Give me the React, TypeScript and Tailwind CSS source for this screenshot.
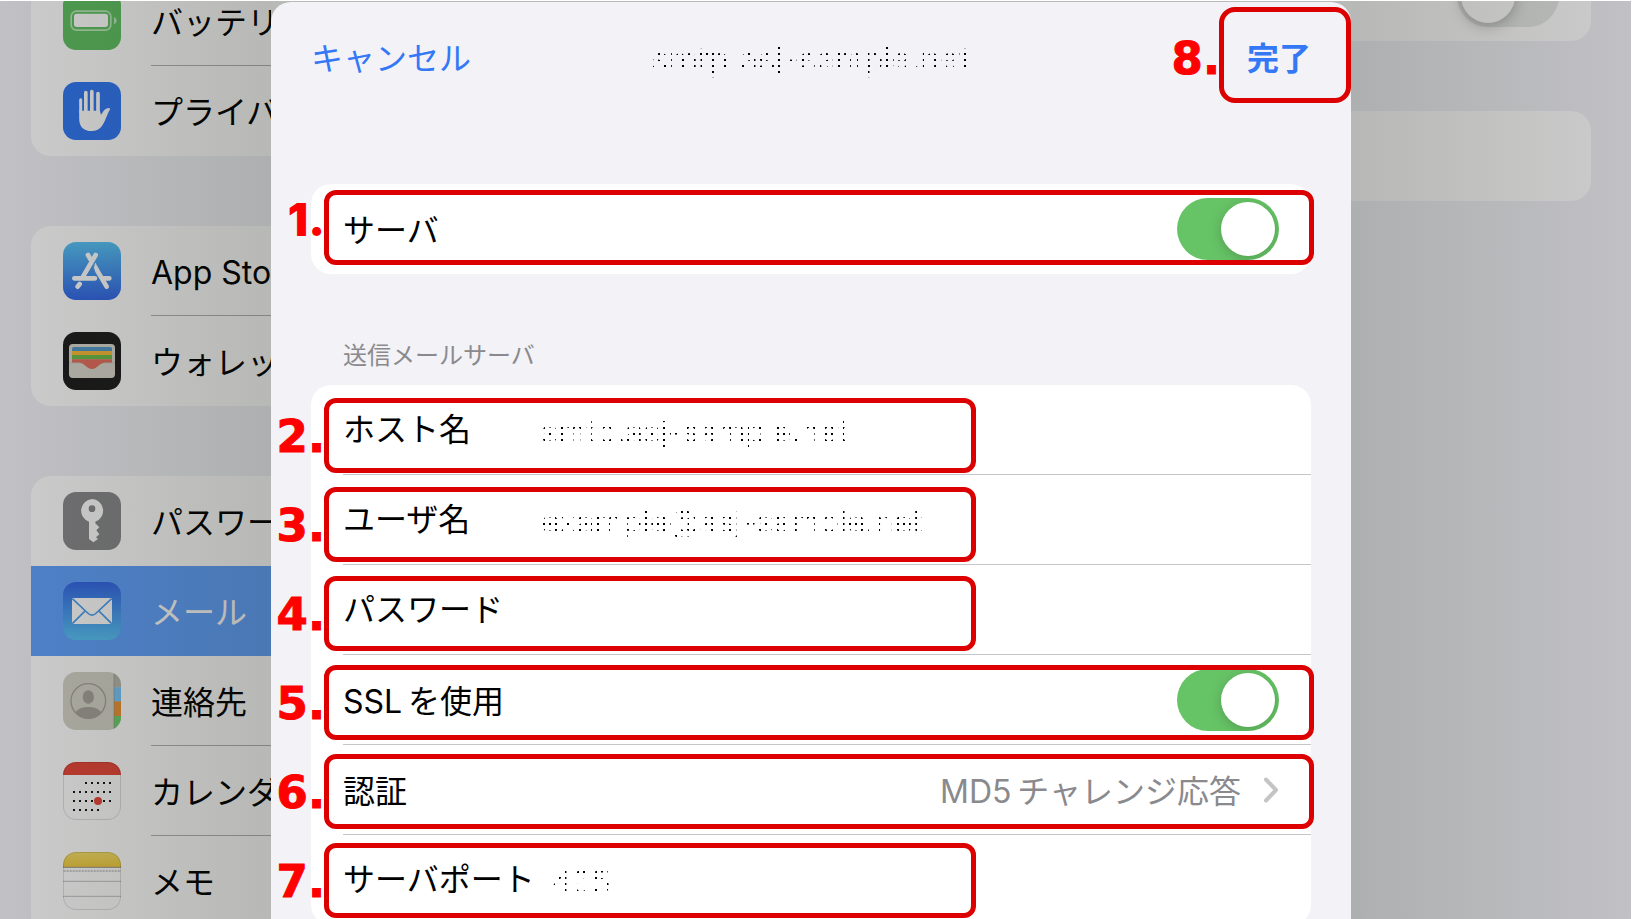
import { useState, type ReactNode } from "react";

const LIGHT = "#cbcbcb";

const icons: Record<string, ReactNode> = {
  battery: (
    <>
      <rect width="174" height="174" fill="#4d9a4f" />
      <rect x="24.500" y="57.500" width="119" height="57" rx="16" fill="none" stroke="#94b894" strokeWidth="5" />
      <rect x="33" y="65" width="102" height="40" rx="8" fill={LIGHT} />
      <path d="M153 75q8 3 8 11t-8 11z" fill="#94b894" />
    </>
  ),
  hand: (
    <>
      <rect width="174" height="174" fill="#2860c2" />
      <g stroke={LIGHT} strokeWidth="11" strokeLinecap="round">
        <path d="M53 53V90" strokeWidth="9" />
        <path d="M68.500 32V90M86.500 29V90M105 35V90" />
      </g>
      <path
        d="M48.500 86H110.500L114 98C121 91 123 78 139 78Q143 79 140 84C135 92 133 100 129 108C120 130 112 147 86 147C62 147 48.500 134 48.500 110Z"
        fill={LIGHT}
      />
    </>
  ),
  store: (
    <>
      <defs>
        <linearGradient id="storeBg" x1="0" y1="0" x2="0" y2="1">
          <stop offset="0" stopColor="#479cc4" />
          <stop offset="1" stopColor="#2a52b8" />
        </linearGradient>
      </defs>
      <rect width="174" height="174" fill="url(#storeBg)" />
      <g stroke={LIGHT} strokeWidth="14" strokeLinecap="round">
        <path d="M34 109H96M122 109H139M50 126L44 134M75 39L82 51M98 39L60 104" />
        <path d="M98 78L131 134" />
      </g>
      <path d="M92 66L98 62L109 88L98 92Z" fill={LIGHT} />
      <path d="M95 62Q87 76 96 92" fill="none" stroke="#3a78be" strokeWidth="3" />
    </>
  ),
  wallet: (
    <>
      <rect width="174" height="174" fill="#181818" />
      <rect x="18" y="36" width="138" height="102" rx="11" fill="#aeaca4" />
      <path d="M27 58V50Q27 45 32 45H142Q147 45 147 50V58Z" fill="#437aa2" />
      <rect x="27" y="57" width="120" height="13" fill="#c8952f" />
      <rect x="27" y="69" width="120" height="13" fill="#57983c" />
      <path d="M27 82H147V93H123C108 93 104 111 87 111S66 93 51 93H27Z" fill="#b7594c" />
      <path d="M18 92H52M122 92H156" stroke="#99978f" strokeWidth="2" />
    </>
  ),
  key: (
    <>
      <rect width="174" height="174" fill="#6e6e70" />
      <path
        d="M87 21A35 35 0 0 1 97 89V94L109 106L100 115L109 127L99 136L105 141L91 151L78 141V89A35 35 0 0 1 87 21Z"
        fill={LIGHT}
      />
      <circle cx="87" cy="50" r="10" fill="#6e6e70" />
    </>
  ),
  mail: (
    <>
      <defs>
        <linearGradient id="mailBg" x1="0" y1="0" x2="0" y2="1">
          <stop offset="0" stopColor="#2a52b8" />
          <stop offset="1" stopColor="#479cc4" />
        </linearGradient>
      </defs>
      <rect width="174" height="174" fill="url(#mailBg)" />
      <rect x="27" y="48" width="120" height="78" rx="3" fill={LIGHT} />
      <path
        d="M28 50L74 93Q87 106 100 93L146 50M28 125L65 88M146 125L109 88"
        fill="none"
        stroke="#3b7fc0"
        strokeWidth="5"
      />
    </>
  ),
  contacts: (
    <>
      <rect width="174" height="174" fill="#aaa9a0" />
      <rect x="153" width="21" height="46" fill="#93928a" />
      <rect x="153" y="46" width="21" height="42" fill="#609ec8" />
      <rect x="153" y="88" width="21" height="44" fill="#bc752a" />
      <rect x="153" y="132" width="21" height="42" fill="#58a656" />
      <path d="M153 0V174" stroke="#77766f" strokeWidth="2" />
      <circle cx="76" cy="87" r="52" fill="none" stroke="#85827b" strokeWidth="4" />
      <ellipse cx="76" cy="75" rx="17" ry="20" fill="#85827b" />
      <path d="M37 121Q49 105 76 105T115 121Q100 140 76 140T37 121Z" fill="#85827b" />
    </>
  ),
  calendar: (
    <>
      <rect width="174" height="174" fill={LIGHT} />
      <rect width="174" height="39" fill="#b8392e" />
      <g stroke="#111" strokeWidth="6">
        <path d="M66 63H146" strokeDasharray="6 12" />
        <path d="M30 90H146" strokeDasharray="6 12" />
        <path d="M30 117H146" strokeDasharray="6 12" />
        <path d="M30 144H110" strokeDasharray="6 12" />
      </g>
      <circle cx="105" cy="117" r="12" fill="#b8392e" />
      <rect x="1" y="1" width="172" height="172" rx="38" fill="none" stroke="#000" strokeOpacity="0.150" strokeWidth="3" />
    </>
  ),
  memo: (
    <>
      <defs>
        <linearGradient id="memoBg" x1="0" y1="0" x2="0" y2="1">
          <stop offset="0" stopColor="#c4b253" />
          <stop offset="1" stopColor="#c1a233" />
        </linearGradient>
      </defs>
      <rect width="174" height="174" fill={LIGHT} />
      <rect width="174" height="46" fill="url(#memoBg)" />
      <path d="M0 46H174" stroke="#7c7a74" strokeWidth="3" />
      <path d="M2 57H174" stroke="#a3a3a3" strokeWidth="6" strokeDasharray="6 3" />
      <path d="M0 88H174M0 133H174" stroke="#9b9b9b" strokeWidth="3" />
      <rect x="1" y="1" width="172" height="172" rx="38" fill="none" stroke="#000" strokeOpacity="0.150" strokeWidth="3" />
    </>
  ),
};

const groups = [
  [
    { icon: "battery", label: "バッテリー" },
    { icon: "hand", label: "プライバシー" },
  ],
  [
    { icon: "store", label: "App Store" },
    { icon: "wallet", label: "ウォレット" },
  ],
  [
    { icon: "key", label: "パスワード" },
    { icon: "mail", label: "メール", selected: true },
    { icon: "contacts", label: "連絡先" },
    { icon: "calendar", label: "カレンダー" },
    { icon: "memo", label: "メモ" },
  ],
];

function SidebarRow({ icon, label, selected, line }: { icon: string; label: string; selected?: boolean; line: boolean }) {
  return (
    <li className={selected ? "bg-[#4e81ca] text-[#cbcbcb]" : "text-black"}>
      <a href="#" className="flex h-[90px] items-center gap-[30px] overflow-hidden pl-8">
        <svg viewBox="0 0 174 174" className="size-[58px] shrink-0 rounded-[13px]" aria-hidden="true">
          {icons[icon]}
        </svg>
        <span
          className={
            "flex h-full flex-1 items-center overflow-hidden pt-1 whitespace-nowrap " +
            (line ? "border-b border-[#8f8f90]" : "")
          }
        >
          {label}
        </span>
      </a>
    </li>
  );
}

function Sidebar() {
  return (
    <nav className="relative overflow-hidden">
      <div className="-mt-[25px] flex flex-col gap-[70px] pl-[31px]">
        {groups.map((rows, g) => (
          <ul
            key={g}
            className={"overflow-hidden bg-[#cccccc] " + (g === 2 ? "rounded-tl-[20px]" : "rounded-l-[20px]")}
          >
            {rows.map((row, i) => (
              <SidebarRow
                key={row.label}
                {...row}
                line={i < rows.length - 1 && row.icon !== "key" && row.icon !== "mail"}
              />
            ))}
          </ul>
        ))}
      </div>
      <div className="pointer-events-none absolute inset-0 bg-linear-to-r from-[#323c2800] to-[#323c2822]" />
    </nav>
  );
}

function DetailPane() {
  return (
    <section className="relative overflow-hidden">
      <div className="-mt-[50px] flex flex-col gap-[70px] pr-10">
        <div className="flex h-[90px] items-center justify-end rounded-r-[20px] bg-[#cccccc] pr-8">
          <input
            type="checkbox"
            aria-label="オプション"
            className="h-[62px] w-[102px] appearance-none rounded-full bg-[#b9bbba] p-1 before:block before:size-[54px] before:rounded-full before:bg-[#cccccc] before:shadow-[0_3px_14px_rgba(0,0,0,0.25)]"
          />
        </div>
        <div className="h-[90px] rounded-r-[20px] bg-[#cccccc]" />
      </div>
      <div className="pointer-events-none absolute inset-0 bg-linear-to-l from-[#323c2800] to-[#323c2822]" />
    </section>
  );
}

function Toggle({ id }: { id: string }) {
  const [on, setOn] = useState(true);
  return (
    <input
      id={id}
      type="checkbox"
      role="switch"
      checked={on}
      onChange={() => setOn(!on)}
      className="flex h-[62px] w-[102px] appearance-none justify-start overflow-hidden rounded-full bg-[#e9e9ea] p-1 before:block before:size-[54px] before:rounded-full before:bg-white before:shadow-[0_3px_14px_rgba(0,0,0,0.2)] checked:justify-end checked:bg-[#67c466]"
    />
  );
}

function Row({
  id,
  label,
  field,
  last,
  children,
}: {
  id: string;
  label: string;
  field?: boolean;
  last?: boolean;
  children?: ReactNode;
}) {
  return (
    <div
      className={
        "ml-8 flex h-[90px] items-center justify-between pr-8 " + (last ? "" : "border-b border-[#c6c6c8]")
      }
    >
      <label htmlFor={id} className={"min-w-[198px] shrink-0 pr-4 whitespace-nowrap " + (field ? "" : "pt-1")}>
        {label}
      </label>
      {children}
    </div>
  );
}

function TextField({ id, type, value }: { id: string; type: string; value: string }) {
  return (
    <input
      id={id}
      type={type}
      defaultValue={value}
      className="h-[60px] min-w-0 flex-1 bg-transparent pt-1 outline-none [mask-image:conic-gradient(from_270deg_at_2px_2px,#000_25%,transparent_0)] [mask-position:2px_3px] [mask-size:6px_6px]"
    />
  );
}

function Mark({ n, wide, tall }: { n: number; wide?: boolean; tall?: boolean }) {
  return (
    <div
      className={
        "relative border-[5px] border-[#dc0000] " +
        (tall ? "h-24 w-[132px] rounded-2xl" : wide ? "h-[75px] rounded-xl" : "h-[75px] w-[652px] rounded-xl")
      }
    >
      <span
        className={
          "absolute right-full mr-1 text-[45px] leading-[45px] text-[#ff0000] " +
          (n === 1
            ? "top-0.5 font-black"
            : "font-['DejaVu_Sans',sans-serif] font-bold [-webkit-text-stroke:1px_#ff0000] " +
              (tall ? "top-6" : "top-[11px]"))
        }
      >
        {n}.
      </span>
    </div>
  );
}

function AccountDialog() {
  return (
    <main
      role="dialog"
      aria-label="smtp.asj-sample.net"
      className="relative mt-px rounded-t-[20px] bg-[#f2f2f7] px-10"
    >
      <header className="grid h-28 grid-cols-[1fr_auto_1fr] items-center pt-0.5">
        <button type="button" className="justify-self-start text-[#3478f6]">
          キャンセル
        </button>
        <h1 className="pt-0.5 font-semibold [mask-image:conic-gradient(from_270deg_at_2px_2px,#000_25%,transparent_0)] [mask-position:1px_3px] [mask-size:6px_6px]">
          smtp.asj-sample.net
        </h1>
        <button type="button" className="justify-self-end font-bold text-[#3478f6]">
          完了
        </button>
      </header>
      <div className="pointer-events-none absolute top-[5px] right-0">
        <Mark n={8} tall />
      </div>

      <section className="relative mt-[70px] rounded-[20px] bg-white">
        <Row id="server" label="サーバ" last>
          <Toggle id="server" />
        </Row>
        <div className="pointer-events-none absolute top-1.5 -right-[3px] left-[13px]">
          <Mark n={1} wide />
        </div>
      </section>

      <h2 className="mt-[66px] mb-[13px] ml-8 text-[24px] leading-8 text-[#8a8a8e]">送信メールサーバ</h2>

      <section className="relative rounded-[20px] bg-white">
        <Row id="host" label="ホスト名" field>
          <TextField id="host" type="text" value="smtp.asj-sample.net" />
        </Row>
        <Row id="user" label="ユーザ名" field>
          <TextField id="user" type="text" value="example@asj-sample.net" />
        </Row>
        <Row id="password" label="パスワード" field>
          <TextField id="password" type="password" value="" />
        </Row>
        <Row id="ssl" label={"SSL\u2009を使用"}>
          <Toggle id="ssl" />
        </Row>
        <Row id="auth" label="認証">
          <button id="auth" type="button" className="flex items-center gap-[22px] text-[#8a8a8e]">
            <span className="pt-1">{"MD5\u2009チャレンジ応答"}</span>
            <svg viewBox="0 0 16 26" className="h-[26px] w-4" aria-hidden="true">
              <path d="M3 2.500L13 13L3 23.500" fill="none" stroke="#c4c4c6" strokeWidth="4" strokeLinecap="round" strokeLinejoin="round" />
            </svg>
          </button>
        </Row>
        <Row id="port" label="サーバポート" field last>
          <TextField id="port" type="text" value="465" />
        </Row>
        <div className="pointer-events-none absolute top-[13px] -right-[3px] left-[13px] flex flex-col gap-[14px]">
          <Mark n={2} />
          <Mark n={3} />
          <Mark n={4} />
          <Mark n={5} wide />
          <Mark n={6} wide />
          <Mark n={7} />
        </div>
      </section>
    </main>
  );
}

export default function App() {
  return (
    <div className="h-screen overflow-hidden bg-white pt-px pr-[9px] font-[Inter,'Noto_Sans_CJK_JP',sans-serif] text-[32px] leading-10 font-normal">
      <div className="grid h-full grid-cols-[271fr_1080fr_280fr] overflow-hidden bg-[#c1c1c5]">
        <Sidebar />
        <div className="min-w-0 bg-[#b8bab7]">
          <AccountDialog />
        </div>
        <DetailPane />
      </div>
    </div>
  );
}
